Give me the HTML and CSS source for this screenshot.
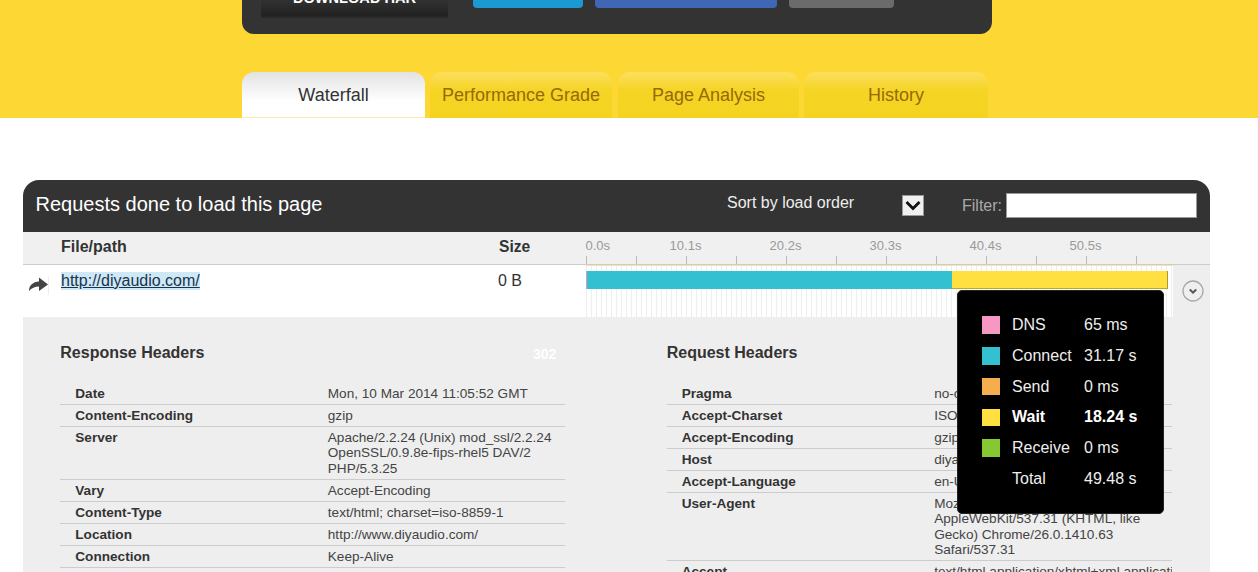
FILE: index.html
```html
<!DOCTYPE html>
<html lang="en">
<head>
<meta charset="utf-8">
<title>Waterfall</title>
<link rel="stylesheet" href="styles.css">
</head>
<body>
<header class="hero">
  <div class="actions">
    <a class="btn-har">DOWNLOAD HAR</a>
    <a class="btn btn-blue"></a>
    <a class="btn btn-fb"></a>
    <a class="btn btn-gray"></a>
  </div>
  <nav class="tabs">
    <a class="tab tab-active">Waterfall</a>
    <a class="tab tab-grade">Performance Grade</a>
    <a class="tab tab-page">Page Analysis</a>
    <a class="tab tab-history">History</a>
  </nav>
</header>
<main class="panel">
  <div class="panel-head">
    <h2 class="panel-title">Requests done to load this page</h2>
    <span class="sort-label">Sort by load order</span>
    <span class="sort-box"><svg width="18" height="12" viewBox="0 0 18 12"><path d="M2.500 2 9 8.500 15.500 2" fill="none" stroke="#111" stroke-width="2.800"/></svg></span>
    <label class="filter-label" for="filter">Filter:</label>
    <input class="filter-input" id="filter" type="text">
  </div>
  <div class="cols">
    <div class="col-file">File/path</div>
    <div class="col-size">Size</div>
    <div class="scale">
      <div class="scale-labels">
        <span class="scale-first">0.0s</span>
        <span class="scale-cell">10.1s</span>
        <span class="scale-cell">20.2s</span>
        <span class="scale-cell">30.3s</span>
        <span class="scale-cell">40.4s</span>
        <span class="scale-cell">50.5s</span>
      </div>
      <div class="scale-ticks"></div>
    </div>
  </div>
  <div class="request">
    <div class="req-icon">
      <svg width="22" height="20" viewBox="0 0 22 20"><path d="M1 16C1 10 5 7 11 6.500V2.500L20 9.500 11 16V11.500C7 11.500 3.500 13 1 16Z" fill="#444"/><path d="M20.500 1V20" stroke="#eee" stroke-width="1"/></svg>
    </div>
    <div class="req-file"><a class="req-link">http://diyaudio.com/</a></div>
    <div class="req-size">0 B</div>
    <div class="req-time">
      <div class="bar">
        <span class="bar-dns"></span>
        <span class="bar-connect"></span>
        <span class="bar-wait"></span>
      </div>
    </div>
    <div class="req-toggle">
      <svg width="22" height="22" viewBox="0 0 22 22"><circle cx="11" cy="11" r="10" fill="#efefef" stroke="#a8a8a8" stroke-width="1.300"/><path d="M7.800 9.500 11 12.700 14.200 9.500" fill="none" stroke="#555" stroke-width="2"/></svg>
    </div>
    <div class="tip">
      <div class="tip-row"><i class="sw sw-dns"></i><span class="tip-name">DNS</span><span>65 ms</span></div>
      <div class="tip-row"><i class="sw sw-connect"></i><span class="tip-name">Connect</span><span>31.17 s</span></div>
      <div class="tip-row"><i class="sw sw-send"></i><span class="tip-name">Send</span><span>0 ms</span></div>
      <div class="tip-row tip-strong"><i class="sw sw-wait"></i><span class="tip-name">Wait</span><span>18.24 s</span></div>
      <div class="tip-row"><i class="sw sw-receive"></i><span class="tip-name">Receive</span><span>0 ms</span></div>
      <div class="tip-row"><i class="sw"></i><span class="tip-name">Total</span><span>49.48 s</span></div>
    </div>
  </div>
  <div class="details">
    <section class="hdr-col">
      <div class="hdr-top"><h3 class="hdr-title">Response Headers</h3><span class="status">302</span></div>
      <dl class="hdr-list">
        <div class="hdr-row"><dt>Date</dt><dd>Mon, 10 Mar 2014 11:05:52 GMT</dd></div>
        <div class="hdr-row"><dt>Content-Encoding</dt><dd>gzip</dd></div>
        <div class="hdr-row"><dt>Server</dt><dd>Apache/2.2.24 (Unix) mod_ssl/2.2.24 OpenSSL/0.9.8e-fips-rhel5 DAV/2 PHP/5.3.25</dd></div>
        <div class="hdr-row"><dt>Vary</dt><dd>Accept-Encoding</dd></div>
        <div class="hdr-row"><dt>Content-Type</dt><dd>text/html; charset=iso-8859-1</dd></div>
        <div class="hdr-row"><dt>Location</dt><dd>http://www.diyaudio.com/</dd></div>
        <div class="hdr-row"><dt>Connection</dt><dd>Keep-Alive</dd></div>
      </dl>
    </section>
    <section class="hdr-col">
      <div class="hdr-top"><h3 class="hdr-title">Request Headers</h3></div>
      <dl class="hdr-list">
        <div class="hdr-row"><dt>Pragma</dt><dd>no-cache</dd></div>
        <div class="hdr-row"><dt>Accept-Charset</dt><dd>ISO-8859-1,utf-8</dd></div>
        <div class="hdr-row"><dt>Accept-Encoding</dt><dd>gzip,deflate,sdch</dd></div>
        <div class="hdr-row"><dt>Host</dt><dd>diyaudio.com</dd></div>
        <div class="hdr-row"><dt>Accept-Language</dt><dd>en-US,en;q=0.8</dd></div>
        <div class="hdr-row"><dt>User-Agent</dt><dd>Mozilla/5.0 (Windows NT 6.1) AppleWebKit/537.31 (KHTML, like Gecko) Chrome/26.0.1410.63 Safari/537.31</dd></div>
        <div class="hdr-row"><dt>Accept</dt><dd class="nowrap">text/html,application/xhtml+xml,application/xml;q=0.9</dd></div>
      </dl>
    </section>
  </div>
</main>
</body>
</html>
```

FILE: styles.css
```css
html, body { margin: 0; padding: 0; height: 572px; overflow: hidden; background: #fff; }
body { font-family: "Liberation Sans", Arial, sans-serif; color: #333; }

.hero { background: #fdd835; height: 118px; display: flex; flex-direction: column; align-items: flex-start; padding-left: 242px; box-sizing: border-box; }
.actions { width: 750px; height: 34px; box-sizing: border-box; background: #333; border-radius: 0 0 12px 12px; display: flex; align-items: flex-start; padding-left: 19px; overflow: hidden; }
.btn-har { width: 187px; height: 28px; margin-top: -10px; line-height: 16px; background: linear-gradient(#333 30%, #222 90%, #2a2a2a); color: #fff; font-weight: bold; font-size: 14.6px; text-align: center; margin-right: 25px; flex: none; }
.btn { height: 8px; border-radius: 0 0 4px 4px; display: block; margin-right: 12px; }
.btn-blue { width: 110px; background: #1b9ad2; }
.btn-fb { width: 182px; background: #3f67b5; }
.btn-gray { width: 105px; background: #6b6b6b; }

.tabs { margin-top: 38px; display: flex; gap: 5px; height: 46px; }
.tab { height: 46px; line-height: 46px; text-align: center; font-size: 18px; border-radius: 12px 12px 0 0; box-sizing: border-box; color: #96690b; background: linear-gradient(#fddf5f, #f5d424 40%, #f4d320); }
.tab-active { width: 183px; color: #333; background: linear-gradient(#e2e2e2, #fff 65%); border-bottom: 1px solid #fbeeb0; }
.tab-grade { width: 182px; margin-right: 1px; }
.tab-page { width: 181px; }
.tab-history { width: 184px; }

.panel { margin: 62px 48px 0 23px; width: 1187px; }
.panel-head { height: 52px; background: #333; border-radius: 16px 16px 0 0; display: flex; align-items: center; color: #fff; }
.panel-title { margin: 0 0 4px 12.5px; width: 691.5px; font-size: 20px; font-weight: normal; }
.sort-label { width: 175px; font-size: 16px; color: #eee; margin-bottom: 6px; }
.sort-box { width: 22px; height: 21px; box-sizing: border-box; background: #f0f0f0; border: 1px solid #999; display: flex; align-items: center; justify-content: center; margin-right: 38px; margin-bottom: 1px; }
.filter-label { font-size: 16px; color: #aaa; margin-right: 4px; }
.filter-input { width: 191px; height: 25px; box-sizing: border-box; border: 1px solid #999; background: #fff; padding: 0; margin: 0 0 1px; }

.cols { height: 33px; box-sizing: border-box; background: #f0f0f0; border-bottom: 1px solid #ccc; display: flex; align-items: flex-start; }
.col-file { width: 476px; padding: 6px 0 0 38px; box-sizing: border-box; font-size: 16px; font-weight: bold; }
.col-size { width: 87px; padding: 6px 0 0; box-sizing: border-box; font-size: 15.6px; font-weight: bold; }
.scale { width: 587.5px; margin-left: -0.5px; }
.scale-labels { display: flex; height: 24px; font-size: 13px; color: #999; padding-top: 6px; box-sizing: border-box; }
.scale-first { width: 50px; box-sizing: border-box; }
.scale-cell { width: 100px; text-align: center; }
.scale-ticks { height: 8px; background: repeating-linear-gradient(90deg, #bbb 0, #bbb 1px, transparent 1px, transparent 50px); }

.request { position: relative; height: 52px; background: #fff; display: flex; }
.req-icon { width: 38px; box-sizing: border-box; padding: 10px 0 0 5px; }
.req-file { width: 437px; padding-top: 7px; font-size: 16px; box-sizing: border-box; }
.req-link { color: #17344a; text-decoration: underline; background: #cfe8f7; display: inline-block; line-height: 18px; }
.req-size { width: 88px; padding-top: 7px; font-size: 16px; box-sizing: border-box; }
.req-time { width: 587.5px; margin-left: -0.5px; box-sizing: border-box; padding-top: 5px; border-top: 1px solid #f4e6a8; background: repeating-linear-gradient(90deg, #eee 0, #eee 1px, #fff 1px, #fff 5px); }
.bar { display: flex; height: 18px; margin-right: 5px; }
.bar-dns { width: 1.5px; background: #d79ac4; }
.bar-connect { width: 365px; background: #33c0d0; }
.bar-wait { flex: 1; background: #ffe040; border-right: 1px solid #a99a2c; border-bottom: 1px solid #b8a92f; }
.req-toggle { flex: 1; background: #eee; padding: 15px 0 0 9px; box-sizing: border-box; }

.tip { position: absolute; left: 934px; top: 25px; width: 207px; height: 224px; box-sizing: border-box; background: #000; border: 1px solid #222; border-radius: 5px; padding: 18.6px 0 0 24px; z-index: 2; color: #eee; font-size: 16px; }
.tip-row { display: flex; align-items: center; height: 30.8px; }
.tip-name { width: 72px; }
.tip-strong { color: #fff; font-weight: bold; }
.sw { width: 18px; height: 17.5px; margin-right: 12px; }
.sw-dns { background: #f598c4; }
.sw-connect { background: #33c0d0; }
.sw-send { background: #f6ad4e; }
.sw-wait { background: #ffe040; }
.sw-receive { background: #85c832; }

.details { background: #eee; height: 255px; overflow: hidden; display: flex; gap: 101.4px; padding: 0 38px 0 37.3px; box-sizing: border-box; }
.hdr-col { width: 505px; flex: none; }
.hdr-top { display: flex; justify-content: space-between; height: 66px; box-sizing: border-box; padding-top: 27px; }
.hdr-title { margin: 0; font-size: 16px; font-weight: bold; color: #333; }
.status { font-size: 14px; font-weight: bold; color: #fff; padding: 2px 9px 0 0; }
.hdr-list { margin: 0; }
.hdr-row { display: flex; border-bottom: 1px solid #ccc; font-size: 13.6px; line-height: 15.4px; padding: 3px 0 2.6px; }
.hdr-row dt { width: 267.5px; padding-left: 15px; box-sizing: border-box; font-weight: bold; flex: none; }
.hdr-row dd { margin: 0; width: 237.5px; flex: none; color: #444; }
.hdr-row .nowrap { white-space: nowrap; overflow: hidden; }
```
